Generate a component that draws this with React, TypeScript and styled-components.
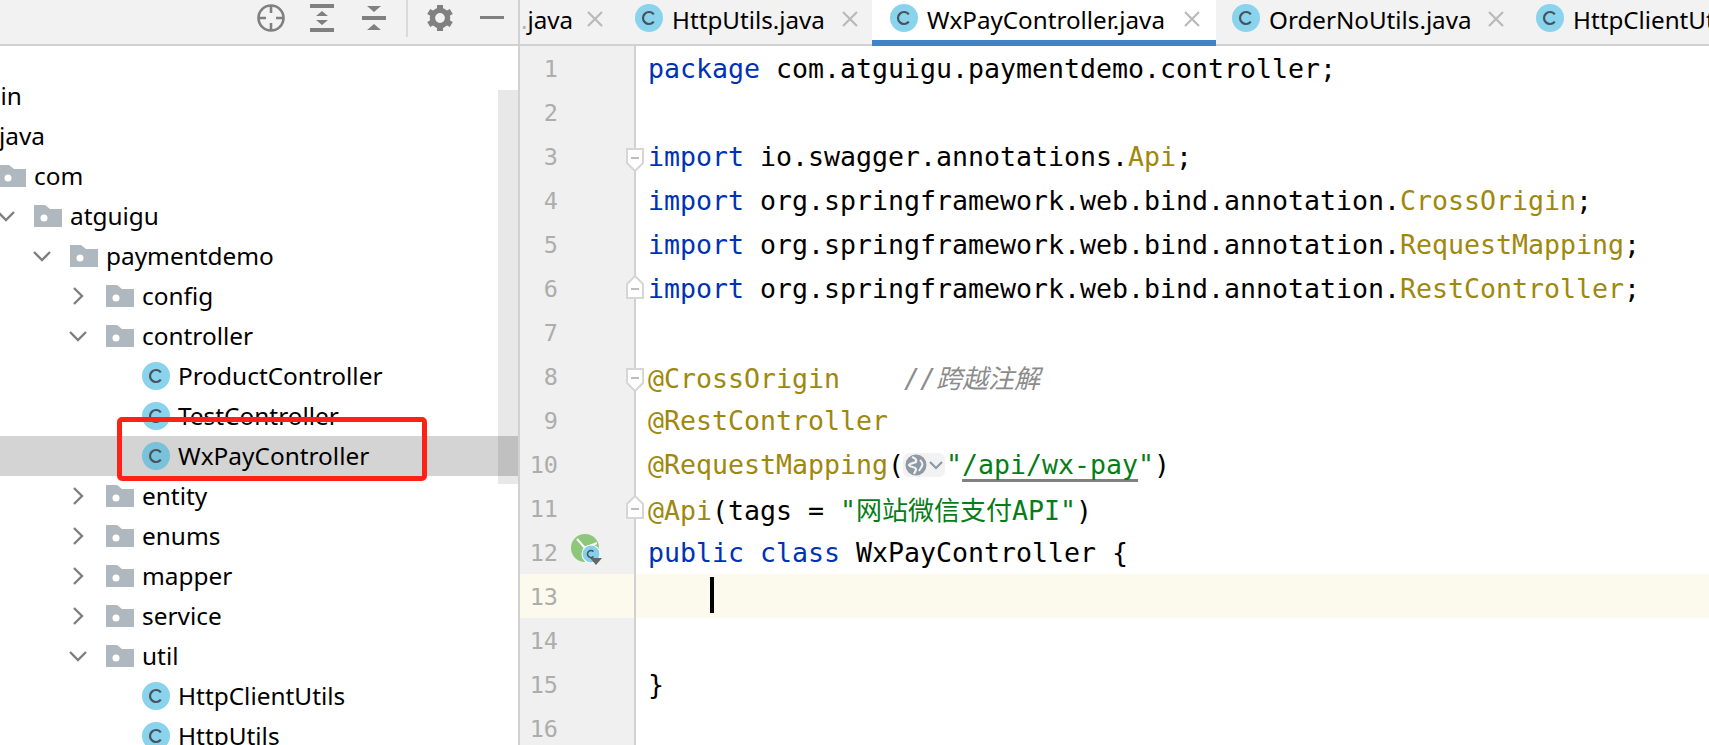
import React from "react";
import styled, { createGlobalStyle } from "styled-components";

const GlobalStyle = createGlobalStyle`
  html, body {
    margin: 0;
    padding: 0;
    background: #fff;
  }
`;

const uiFont = `"Noto Sans", "Open Sans", sans-serif`;
const codeFont = `"DejaVu Sans Mono", "Liberation Mono", monospace`;
const cjkFont = `"Noto Sans CJK SC", sans-serif`;
const lineColor = "#d1d1d1";

const Window = styled.div`
  display: flex;
  width: 1709px;
  height: 745px;
  overflow: hidden;
  background: #fff;
`;

const ProjectPanel = styled.div`
  position: relative;
  display: flex;
  flex-direction: column;
  width: 518px;
  flex: none;
  overflow: hidden;
`;

const Toolbar = styled.div`
  display: flex;
  align-items: flex-start;
  justify-content: flex-end;
  height: 44px;
  flex: none;
  padding-right: 14px;
  background: #f2f2f2;
  border-bottom: 2px solid ${lineColor};
`;

const ToolIcon = styled.svg<{ $gap: number }>`
  display: block;
  flex: none;
  margin-left: ${(p) => p.$gap}px;
  margin-top: 4px;
`;

const ToolSeparator = styled.div`
  width: 2px;
  height: 37px;
  flex: none;
  margin-left: 20px;
  background: #dadada;
`;

const Tree = styled.div`
  display: flex;
  flex-direction: column;
  padding-top: 30px;
`;

const TreeRow = styled.div<{ $selected?: boolean }>`
  display: flex;
  height: 40px;
  flex: none;
  background: ${(p) => (p.$selected ? "#d4d4d4" : "transparent")};
`;

const TreeItem = styled.div<{ $left: number }>`
  display: flex;
  align-items: center;
  gap: 8px;
  margin-left: ${(p) => p.$left}px;
  font-family: ${uiFont};
  font-size: 24.4px;
  color: #000;
  white-space: nowrap;
`;

const TreeLabel = styled.span`
  margin-top: -2px;
`;

const ChevronSlot = styled.div`
  display: flex;
  justify-content: center;
  width: 20px;
  margin-right: 10px;
  flex: none;
`;

const TreeScrollbar = styled.div`
  position: absolute;
  left: 498px;
  top: 90px;
  width: 20px;
  height: 394px;
  background: rgba(0, 0, 0, 0.09);
`;

const RedBox = styled.div`
  position: absolute;
  left: 117px;
  top: 417px;
  width: 310px;
  height: 64px;
  box-sizing: border-box;
  border: 5px solid #fe2116;
  border-radius: 5px;
`;

const EditorPanel = styled.div`
  display: flex;
  flex-direction: column;
  flex: 1;
  min-width: 0;
  border-left: 2px solid ${lineColor};
`;

const TabStrip = styled.div`
  display: flex;
  height: 46px;
  flex: none;
  overflow: hidden;
  background: #f2f2f2;
  box-shadow: inset 0 -2px 0 ${lineColor};
`;

const Tab = styled.div<{ $active?: boolean }>`
  display: flex;
  align-items: flex-start;
  flex: none;
  height: 46px;
  box-sizing: border-box;
  padding: 4px ${(p) => (p.$active ? "16px" : "14px")} 0 18px;
  margin-right: ${(p) => (p.$active ? "-2px" : "0")};
  font-family: ${uiFont};
  font-size: 24.2px;
  color: #000;
  white-space: nowrap;
  background: ${(p) => (p.$active ? "#fff" : "transparent")};
  border-bottom: ${(p) => (p.$active ? "6px solid #4083c9" : "none")};
`;

const HeadTab = styled(Tab)`
  padding-left: 1px;
`;

const TabLabel = styled.span<{ $width: number }>`
  width: ${(p) => p.$width}px;
  margin-left: 9px;
  line-height: 32px;
`;

const HeadLabel = styled.span`
  width: 66px;
  line-height: 32px;
`;

const ClippedDot = styled.span`
  color: #b4b4b4;
`;

const TabClose = styled.svg`
  display: block;
  flex: none;
  margin-top: 7px;
`;

const Code = styled.div`
  display: flex;
  flex-direction: column;
  flex: 1;
  overflow: hidden;
`;

const Line = styled.div<{ $current?: boolean }>`
  display: flex;
  height: 44px;
  flex: none;
  background: ${(p) => (p.$current ? "#fcfaed" : "transparent")};
`;

const Gutter = styled.div<{ $current?: boolean }>`
  position: relative;
  width: 114px;
  flex: none;
  border-right: 2px solid ${lineColor};
  background: ${(p) => (p.$current ? "#fcfaed" : "#f0f0f0")};
`;

const LineNumber = styled.div`
  width: 38px;
  padding-top: 2px;
  text-align: right;
  font-family: ${codeFont};
  font-size: 23.5px;
  line-height: 42px;
  color: #adadad;
`;

const FoldMark = styled.svg<{ $up?: boolean }>`
  position: absolute;
  right: -10px;
  top: ${(p) => (p.$up ? 9 : 14)}px;
  z-index: 1;
`;

const RunIcon = styled.svg`
  position: absolute;
  left: 51px;
  top: 4px;
`;

const CodeText = styled.div`
  padding: 2px 0 0 12px;
  height: 42px;
  font-family: ${codeFont}, ${cjkFont};
  font-size: 26.58px;
  line-height: 42px;
  color: #000;
  white-space: pre;
`;

const Keyword = styled.span`
  color: #0033b3;
`;

const Annotation = styled.span`
  color: #9e880d;
`;

const Str = styled.span`
  color: #067d17;
`;

const Link = styled.span`
  text-decoration: underline;
  text-decoration-color: #808080;
  text-decoration-thickness: 2.5px;
  text-decoration-skip-ink: none;
  text-underline-offset: 5px;
`;

const Comment = styled.span`
  color: #8c8c8c;
  font-style: italic;
`;

const Han = styled.span`
  font-family: ${cjkFont};
  font-size: 26px;
`;

const Inlay = styled.span`
  display: inline-flex;
  align-items: center;
  justify-content: center;
  vertical-align: middle;
  width: 42px;
  height: 24px;
  margin: -3px 1px 0 -1px;
  border-radius: 6px;
  background: #f2f2f2;
`;

const Caret = styled.span`
  display: inline-block;
  width: 4px;
  height: 36px;
  margin: 0 -2px 0 -2px;
  vertical-align: -7px;
  background: #000;
`;

const ClassIcon: React.FC<{ dim?: boolean }> = ({ dim }) => (
  <svg width="28" height="28" viewBox="0 0 28 28" style={{ flex: "none", display: "block" }}>
    <circle cx="14" cy="14" r="14" fill={dim ? "#78c2da" : "#89d3ed"} />
    <path d="M18.8 10.4A6 6 0 1 0 18.8 17.6" fill="none" stroke="#47535c" strokeWidth="2.2" />
  </svg>
);

const FolderIcon: React.FC = () => (
  <svg width="28" height="22" viewBox="0 0 28 22" style={{ flex: "none", display: "block" }}>
    <path d="M0 0H11L16 4H28V22H0Z" fill="#afb8bf" />
    <circle cx="10" cy="13" r="3.5" fill="#fff" />
  </svg>
);

const Chevron: React.FC<{ open?: boolean }> = ({ open }) => (
  <svg width="18" height="18" viewBox="0 0 18 18" style={{ display: "block" }}>
    <path
      d={open ? "M1 5L9 13L17 5" : "M5 1L13 9L5 17"}
      fill="none"
      stroke="#7f7f7f"
      strokeWidth="2.4"
    />
  </svg>
);

const CloseIcon: React.FC = () => (
  <TabClose width="16" height="16" viewBox="0 0 16 16">
    <path d="M1 1L15 15M15 1L1 15" stroke="#b9b9b9" strokeWidth="2.2" />
  </TabClose>
);

const FoldIcon: React.FC<{ up?: boolean }> = ({ up }) => (
  <FoldMark $up={up} width="18" height="24" viewBox="0 0 18 24">
    <path
      d={up ? "M1 23V9L9 1L17 9V23Z" : "M1 1V15L9 23L17 15V1Z"}
      fill="#fff"
      stroke="#d6d6d6"
      strokeWidth="2"
    />
    <path d={up ? "M5 14H13" : "M5 10H13"} stroke="#bdbdbd" strokeWidth="2" />
  </FoldMark>
);

const GlobeIcon: React.FC = () => (
  <svg width="40" height="24" viewBox="0 0 40 24" style={{ display: "block" }}>
    <circle cx="12" cy="12" r="10.5" fill="#8e99a3" />
    <path d="M8 4C11 5 13 6 12 9C10 10 6 10 5 12C6 15 11 13 12 16C12 18 11 19 10 21" fill="none" stroke="#f2f2f2" strokeWidth="2.2" />
    <path d="M16 7C18 9 19 11 18 13C17 15 16 16 15 18" fill="none" stroke="#f2f2f2" strokeWidth="2" />
    <path d="M26 9L32 15L38 9" fill="none" stroke="#8e99a3" strokeWidth="2.2" />
  </svg>
);

type TreeEntry = {
  label: string;
  left: number;
  kind?: "folder" | "class";
  open?: boolean;
  hasArrow?: boolean;
  selected?: boolean;
};

const treeEntries: TreeEntry[] = [
  { label: "main", left: -36 },
  { label: "java", left: -1 },
  { label: "com", left: -2, kind: "folder" },
  { label: "atguigu", left: 34, kind: "folder", open: true, hasArrow: true },
  { label: "paymentdemo", left: 70, kind: "folder", open: true, hasArrow: true },
  { label: "config", left: 106, kind: "folder", hasArrow: true },
  { label: "controller", left: 106, kind: "folder", open: true, hasArrow: true },
  { label: "ProductController", left: 142, kind: "class" },
  { label: "TestController", left: 142, kind: "class" },
  { label: "WxPayController", left: 142, kind: "class", selected: true },
  { label: "entity", left: 106, kind: "folder", hasArrow: true },
  { label: "enums", left: 106, kind: "folder", hasArrow: true },
  { label: "mapper", left: 106, kind: "folder", hasArrow: true },
  { label: "service", left: 106, kind: "folder", hasArrow: true },
  { label: "util", left: 106, kind: "folder", open: true, hasArrow: true },
  { label: "HttpClientUtils", left: 142, kind: "class" },
  { label: "HttpUtils", left: 142, kind: "class" },
];

const tabs = [
  { name: "HttpUtils.java", width: 170 },
  { name: "WxPayController.java", width: 257, active: true },
  { name: "OrderNoUtils.java", width: 219 },
  { name: "HttpClientUtils.java", width: 260 },
];

const codeLines: React.ReactNode[] = [
  <>
    <Keyword>package</Keyword> com.atguigu.paymentdemo.controller;
  </>,
  null,
  <>
    <Keyword>import</Keyword> io.swagger.annotations.<Annotation>Api</Annotation>;
  </>,
  <>
    <Keyword>import</Keyword> org.springframework.web.bind.annotation.<Annotation>CrossOrigin</Annotation>;
  </>,
  <>
    <Keyword>import</Keyword> org.springframework.web.bind.annotation.<Annotation>RequestMapping</Annotation>;
  </>,
  <>
    <Keyword>import</Keyword> org.springframework.web.bind.annotation.<Annotation>RestController</Annotation>;
  </>,
  null,
  <>
    <Annotation>@CrossOrigin</Annotation>
    {"    "}
    <Comment>
      //<Han>跨越注解</Han>
    </Comment>
  </>,
  <Annotation>@RestController</Annotation>,
  <>
    <Annotation>@RequestMapping</Annotation>(
    <Inlay>
      <GlobeIcon />
    </Inlay>
    <Str>
      "<Link>/api/wx-pay</Link>"
    </Str>
    )
  </>,
  <>
    <Annotation>@Api</Annotation>(tags = <Str>"<Han>网站微信支付</Han>API"</Str>)
  </>,
  <>
    <Keyword>public</Keyword> <Keyword>class</Keyword> WxPayController {"{"}
  </>,
  <>
    {"    "}
    <Caret />
  </>,
  null,
  "}",
  null,
];

const foldMarks: Record<number, "up" | "down"> = { 3: "down", 6: "up", 8: "down", 11: "up" };

const App: React.FC = () => {
  return (
    <>
      <GlobalStyle />
      <Window>
        <ProjectPanel>
          <Toolbar>
            <ToolIcon $gap={0} width="28" height="28" viewBox="0 0 28 28">
              <circle cx="14" cy="14" r="12.5" fill="none" stroke="#808080" strokeWidth="2.6" />
              <path d="M14 2V9M14 19V26M2 14H9M19 14H26" stroke="#808080" strokeWidth="2.6" />
            </ToolIcon>
            <ToolIcon $gap={25} width="24" height="28" viewBox="0 0 24 28">
              <path d="M0 0H24V4H0ZM0 24H24V28H0Z" fill="#808080" />
              <path d="M12 7L18 12H6ZM12 21L6 16H18Z" fill="#808080" />
            </ToolIcon>
            <ToolIcon $gap={28} width="24" height="28" viewBox="0 0 24 28">
              <path d="M0 12H24V16H0Z" fill="#808080" />
              <path d="M5 2H19L12 8ZM5 26H19L12 20Z" fill="#808080" />
            </ToolIcon>
            <ToolSeparator />
            <ToolIcon $gap={19} width="26" height="28" viewBox="0 0 26 28">
              <g transform="translate(13 14)">
                <circle r="7.6" fill="none" stroke="#808080" strokeWidth="5.4" />
                {[0, 60, 120, 180, 240, 300].map((a) => (
                  <rect key={a} x="-3" y="-13" width="6" height="6" fill="#808080" transform={`rotate(${a})`} />
                ))}
              </g>
            </ToolIcon>
            <ToolIcon $gap={27} width="24" height="28" viewBox="0 0 24 28">
              <path d="M0 12H24V15H0Z" fill="#808080" />
            </ToolIcon>
          </Toolbar>
          <Tree>
            {treeEntries.map((entry) => (
              <TreeRow key={entry.label} $selected={entry.selected}>
                <TreeItem $left={entry.left - 38}>
                  <ChevronSlot>{entry.hasArrow && <Chevron open={entry.open} />}</ChevronSlot>
                  {entry.kind === "folder" && <FolderIcon />}
                  {entry.kind === "class" && <ClassIcon dim={entry.selected} />}
                  <TreeLabel>{entry.label}</TreeLabel>
                </TreeItem>
              </TreeRow>
            ))}
          </Tree>
          <TreeScrollbar />
          <RedBox />
        </ProjectPanel>
        <EditorPanel>
          <TabStrip>
            <HeadTab>
              <HeadLabel>
                <ClippedDot>.</ClippedDot>java
              </HeadLabel>
              <CloseIcon />
            </HeadTab>
            {tabs.map((tab) => (
              <Tab key={tab.name} $active={tab.active}>
                <ClassIcon />
                <TabLabel $width={tab.width}>{tab.name}</TabLabel>
                <CloseIcon />
              </Tab>
            ))}
          </TabStrip>
          <Code>
            {codeLines.map((content, i) => (
              <Line key={i} $current={i === 12}>
                <Gutter $current={i === 12}>
                  <LineNumber>{i + 1}</LineNumber>
                  {foldMarks[i + 1] && <FoldIcon up={foldMarks[i + 1] === "up"} />}
                  {i === 11 && (
                    <RunIcon width="32" height="32" viewBox="0 0 32 32">
                      <circle cx="14" cy="14" r="14" fill="#8fc77a" />
                      <path d="M14 14L6 5M14 14L26 9M14 14L15 28" stroke="#fff" strokeWidth="2" />
                      <circle cx="20" cy="20" r="9.5" fill="#fff" />
                      <circle cx="20" cy="20" r="8.5" fill="#86d0ea" />
                      <path d="M22.5 17.5A3.5 3.5 0 1 0 22.5 22.5" fill="none" stroke="#47535c" strokeWidth="1.6" />
                      <path d="M19 24H31L25 31Z" fill="#666" />
                    </RunIcon>
                  )}
                </Gutter>
                <CodeText>{content}</CodeText>
              </Line>
            ))}
          </Code>
        </EditorPanel>
      </Window>
    </>
  );
};

export default App;
